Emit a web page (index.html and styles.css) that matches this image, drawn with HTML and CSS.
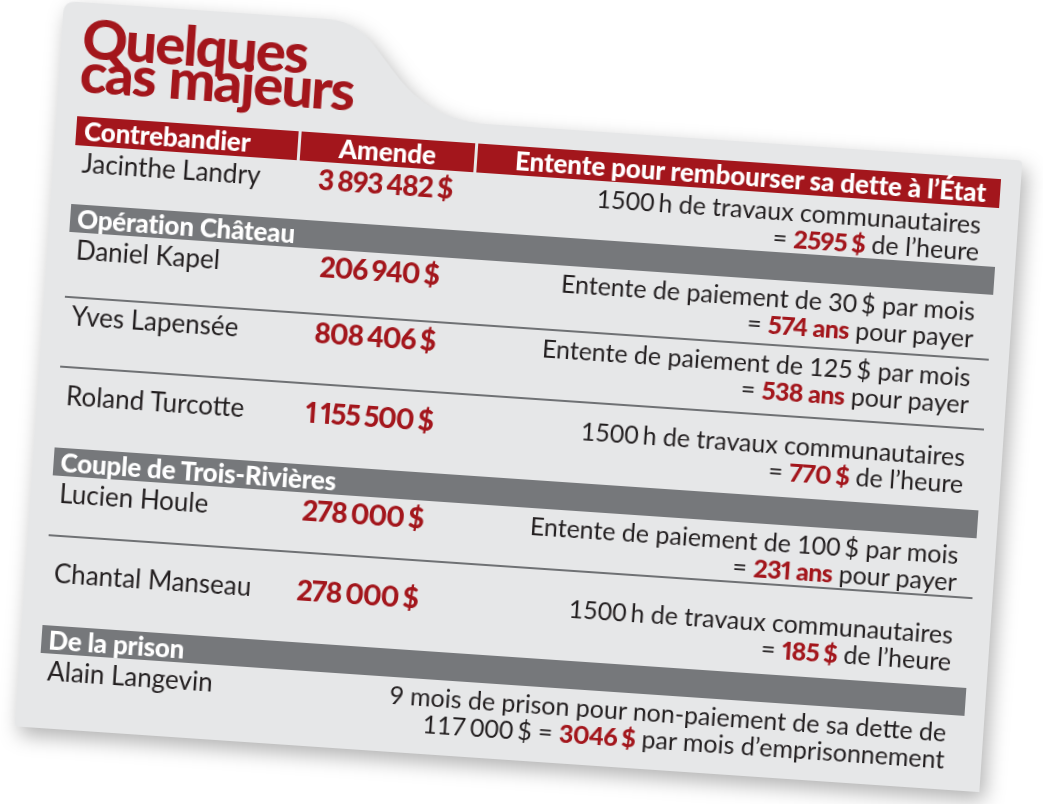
FILE: index.html
```html
<!DOCTYPE html>
<html lang="fr">
<head>
<meta charset="utf-8">
<title>Quelques cas majeurs</title>
<link rel="stylesheet" href="styles.css">
</head>
<body>
<div class="stage">
  <div class="card-wrap">
    <div class="card">
      <h1 class="title">Quelques<br>cas majeurs</h1>
      <div class="table">
        <div class="head">
          <div class="hcell">Contrebandier</div>
          <div class="hcell hcell--center">Amende</div>
          <div class="hcell hcell--right">Entente pour rembourser sa dette à l’État</div>
        </div>

        <div class="row row--xs">
          <div class="name">Jacinthe Landry</div>
          <div class="amount">3<span class="gap"></span>893<span class="gap"></span>482<span class="gap"></span>$</div>
          <div class="desc">1500<span class="gap"></span>h de travaux communautaires<br>= <b>2595<span class="gap"></span>$</b> de l’heure</div>
        </div>

        <div class="group">Opération Château</div>
        <div class="row row--s">
          <div class="name">Daniel Kapel</div>
          <div class="amount">206<span class="gap"></span>940<span class="gap"></span>$</div>
          <div class="desc">Entente de paiement de 30<span class="gap"></span>$ par mois<br>= <b>574 ans</b> pour payer</div>
        </div>
        <div class="row row--m row--sep">
          <div class="name">Yves Lapensée</div>
          <div class="amount">808<span class="gap"></span>406<span class="gap"></span>$</div>
          <div class="desc">Entente de paiement de 125<span class="gap"></span>$ par mois<br>= <b>538 ans</b> pour payer</div>
        </div>
        <div class="row row--l row--sep">
          <div class="name">Roland Turcotte</div>
          <div class="amount">1<span class="gap"></span>155<span class="gap"></span>500<span class="gap"></span>$</div>
          <div class="desc">1500<span class="gap"></span>h de travaux communautaires<br>= <b>770<span class="gap"></span>$</b> de l’heure</div>
        </div>

        <div class="group">Couple de Trois-Rivières</div>
        <div class="row row--xs">
          <div class="name">Lucien Houle</div>
          <div class="amount">278<span class="gap"></span>000<span class="gap"></span>$</div>
          <div class="desc">Entente de paiement de 100<span class="gap"></span>$ par mois<br>= <b>231 ans</b> pour payer</div>
        </div>
        <div class="row row--xl row--sep">
          <div class="name">Chantal Manseau</div>
          <div class="amount">278<span class="gap"></span>000<span class="gap"></span>$</div>
          <div class="desc">1500<span class="gap"></span>h de travaux communautaires<br>= <b>185<span class="gap"></span>$</b> de l’heure</div>
        </div>

        <div class="group">De la prison</div>
        <div class="row row--last">
          <div class="name">Alain Langevin</div>
          <div class="desc desc--wide">9 mois de prison pour non-paiement de sa dette de<br>117<span class="gap"></span>000<span class="gap"></span>$ = <b>3046<span class="gap"></span>$</b> par mois d’emprisonnement</div>
        </div>
      </div>
    </div>
  </div>
</div>
</body>
</html>
```

FILE: styles.css
```css
* {
  box-sizing: border-box;
}

html,
body {
  margin: 0;
  padding: 0;
  background: #ffffff;
}

body {
  width: 1043px;
  height: 804px;
  overflow: hidden;
  font-family: Lato, "Open Sans", sans-serif;
}

.stage {
  padding: 1px 0 0 64px;
}

.card-wrap {
  width: 967px;
  height: 727px;
  transform-origin: 0 0;
  transform: rotate(3.9deg);
  filter: drop-shadow(5px 8px 10px rgba(0, 0, 0, 0.3));
}

.card {
  width: 100%;
  height: 100%;
  background: #e6e7e8;
  clip-path: path("M0 12 Q0 0 12 0 L262 0 C296 0 308 18 327 40 C350 68 376 94 434 94 L963 94 Q967 94 967 98 L967 727 L3 727 Q0 727 0 724 Z");
  display: flex;
  flex-direction: column;
  padding: 0 20px 0 21px;
}

.title {
  margin: 0;
  height: 114px;
  flex: none;
  padding-top: 18px;
  font-family: Lato, sans-serif;
  font-weight: 900;
  font-size: 56px;
  line-height: 34px;
  letter-spacing: -1.8px;
  word-spacing: 2px;
  color: #a3161c;
}

.table {
  flex: 1;
  display: flex;
  flex-direction: column;
}

.head,
.row {
  display: grid;
  grid-template-columns: 222px 174px 1fr;
  column-gap: 3px;
}

.head {
  height: 29px;
  flex: none;
}

.hcell {
  background: #a3161c;
  color: #ffffff;
  font-weight: 900;
  font-size: 26px;
  line-height: 29px;
  padding: 0 8px;
  white-space: nowrap;
  letter-spacing: -0.1px;
}

.hcell--center {
  text-align: center;
}

.hcell--right {
  text-align: right;
  padding-right: 14px;
}

.group {
  height: 28px;
  flex: none;
  background: #76787b;
  color: #ffffff;
  font-weight: 900;
  font-size: 26px;
  line-height: 28px;
  padding-left: 7px;
  letter-spacing: -0.2px;
  white-space: nowrap;
}

.row {
  align-items: start;
  padding-top: 4px;
  font-size: 26px;
  line-height: 27px;
  color: #231f20;
  flex: none;
}

.row--sep {
  border-top: 2px solid #6f7174;
}

.row--xs { height: 59px; }
.row--s { height: 64px; }
.row--m { height: 70px; }
.row--l { height: 82px; padding-top: 14px; }
.row--xl { height: 91px; padding-top: 23px; }

.row--last {
  flex: 1;
}

.gap {
  display: inline-block;
  width: 4px;
}

.name {
  padding-left: 8px;
  white-space: nowrap;
}

.amount {
  text-align: center;
  font-weight: 900;
  font-size: 28px;
  letter-spacing: -1px;
  font-variant-numeric: proportional-nums;
  color: #a3161c;
  white-space: nowrap;
}

.desc {
  text-align: right;
  padding-right: 17px;
  font-size: 25px;
  white-space: nowrap;
}

.desc b {
  font-weight: 900;
  color: #a3161c;
  letter-spacing: -0.6px;
  font-variant-numeric: proportional-nums;
}

.desc--wide {
  grid-column: 2 / 4;
}
```
